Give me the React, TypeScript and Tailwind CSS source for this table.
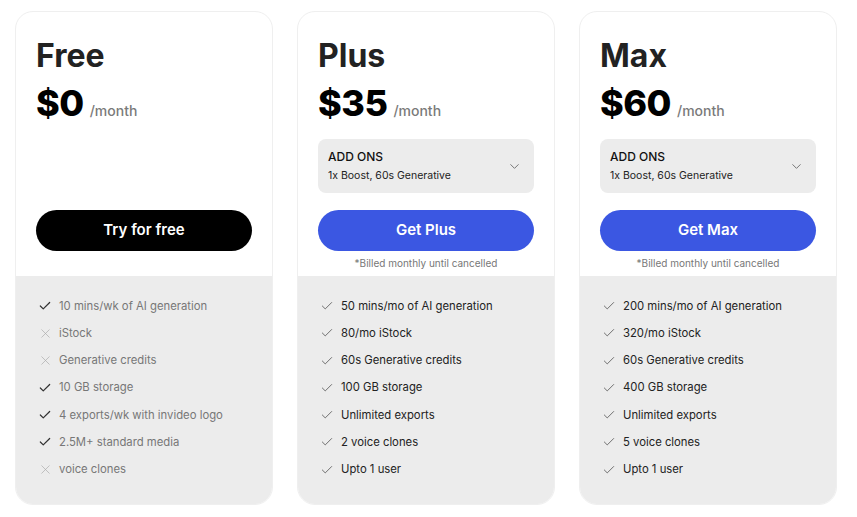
import { Check, X, ChevronDown } from "lucide-react";

type Feature = { text: string; on: boolean };

type Plan = {
  name: string;
  price: string;
  cta: string;
  dark?: boolean;
  addons?: boolean;
  muted?: boolean;
  features: Feature[];
};

const plans: Plan[] = [
  {
    name: "Free",
    price: "$0",
    cta: "Try for free",
    dark: true,
    muted: true,
    features: [
      { text: "10 mins/wk of AI generation", on: true },
      { text: "iStock", on: false },
      { text: "Generative credits", on: false },
      { text: "10 GB storage", on: true },
      { text: "4 exports/wk with invideo logo", on: true },
      { text: "2.5M+ standard media", on: true },
      { text: "voice clones", on: false },
    ],
  },
  {
    name: "Plus",
    price: "$35",
    cta: "Get Plus",
    addons: true,
    features: [
      { text: "50 mins/mo of AI generation", on: true },
      { text: "80/mo iStock", on: true },
      { text: "60s Generative credits", on: true },
      { text: "100 GB storage", on: true },
      { text: "Unlimited exports", on: true },
      { text: "2 voice clones", on: true },
      { text: "Upto 1 user", on: true },
    ],
  },
  {
    name: "Max",
    price: "$60",
    cta: "Get Max",
    addons: true,
    features: [
      { text: "200 mins/mo of AI generation", on: true },
      { text: "320/mo iStock", on: true },
      { text: "60s Generative credits", on: true },
      { text: "400 GB storage", on: true },
      { text: "Unlimited exports", on: true },
      { text: "5 voice clones", on: true },
      { text: "Upto 1 user", on: true },
    ],
  },
];

function PlanCard({ plan }: { plan: Plan }) {
  return (
    <div className="w-[258px] h-[494px] flex flex-col rounded-[18px] border border-[#efefef] bg-white overflow-hidden">
      {/* Header */}
      <div className="h-[264px] px-5 pt-[25px] flex flex-col">
        <h2 className="text-[32px] leading-[38px] font-bold text-[#222]">{plan.name}</h2>
        <div className="flex items-baseline gap-[6px] mt-[6px]">
          <span className="text-[36px] leading-[44px] font-extrabold text-black tracking-[-0.5px]">
            {plan.price}
          </span>
          <span className="text-[14px] font-medium text-[#7a7a7a]">/month</span>
        </div>

        {plan.addons ? (
          <div className="mt-[14px] h-[54px] rounded-[8px] bg-[#ececec] pl-[10px] pr-[12px] flex items-center justify-between">
            <div className="flex flex-col">
              <span className="text-[12px] leading-[16px] font-medium text-[#111]">ADD ONS</span>
              <span className="text-[10.5px] leading-[16px] mt-[3px] text-[#222]">1x Boost, 60s Generative</span>
            </div>
            <ChevronDown className="w-[15px] h-[15px] text-[#777]" strokeWidth={1.6} />
          </div>
        ) : (
          <div className="mt-[14px] h-[54px]" />
        )}

        <button
          className={
            "mt-[17px] h-[41px] w-full rounded-full text-[15px] font-semibold text-white " +
            (plan.dark ? "bg-black" : "bg-[#3b57e2]")
          }
        >
          {plan.cta}
        </button>
        {plan.dark ? (
          <div className="h-[14px] mt-[5px]" />
        ) : (
          <p className="mt-[5px] text-center text-[10px] leading-[14px] text-[#777]">
            *Billed monthly until cancelled
          </p>
        )}
      </div>

      {/* Features */}
      <ul className="flex-1 bg-[#ececec] px-[22px] pt-[22px] flex flex-col gap-[11.3px]">
        {plan.features.map((f) => (
          <li key={f.text} className="flex items-center gap-[7px] h-[16px]">
            <span className="w-[14px] h-[16px] flex items-center justify-center shrink-0">
              {f.on ? (
                <Check
                  className={"w-[14px] h-[14px] " + (plan.muted ? "text-[#333]" : "text-[#666]")}
                  strokeWidth={plan.muted ? 2.1 : 1.6}
                />
              ) : (
                <X className="w-[15px] h-[15px] shrink-0 text-[#aaa]" strokeWidth={1.1} />
              )}
            </span>
            <span
              className={
                "text-[11.3px] " + (plan.muted ? "text-[#777]" : "text-[#222]")
              }
            >
              {f.text}
            </span>
          </li>
        ))}
      </ul>
    </div>
  );
}

export default function App() {
  return (
    <div
      className="w-[857px] h-[517px] bg-white flex gap-[24px] pl-[15px] pt-[11px]"
      style={{ fontFamily: "Inter, 'Noto Sans', sans-serif" }}
    >
      {plans.map((p) => (
        <PlanCard key={p.name} plan={p} />
      ))}
    </div>
  );
}
